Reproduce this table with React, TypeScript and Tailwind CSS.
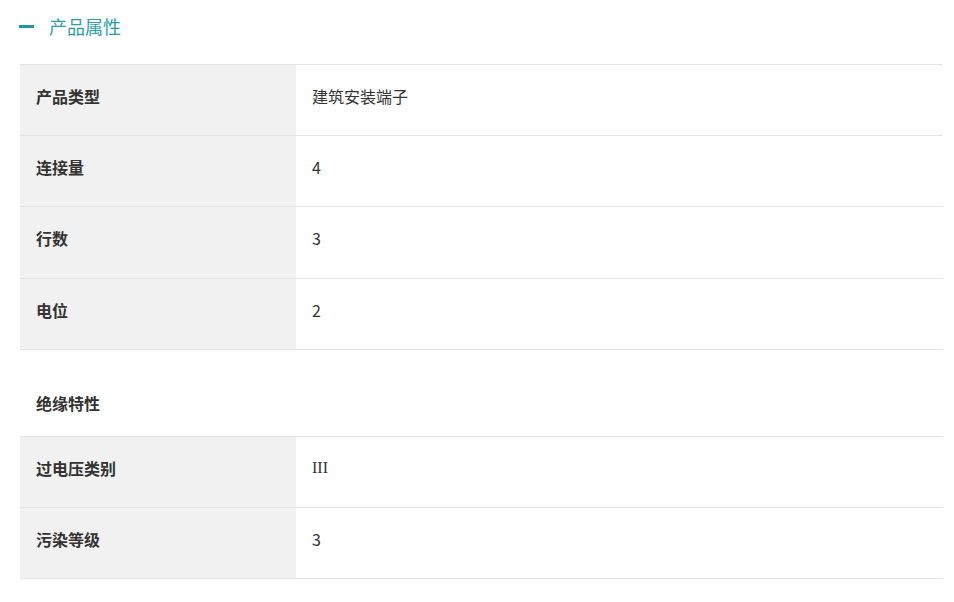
import React from "react";

const font = { fontFamily: '"Noto Sans CJK SC", "Liberation Sans", sans-serif' };

function Row({ label, value, serif }: { label: string; value: string; serif?: boolean }) {
  return (
    <div className="flex h-[71.2px] border-b border-[#e5e5e5]">
      <div className="w-[276px] shrink-0 bg-[#f1f1f1] pl-4 pb-[8px] flex items-center text-[16px] font-bold text-[#333]">
        {label}
      </div>
      <div
        className="flex-1 pl-4 pb-[8px] flex items-center text-[16px] text-[#333]"
        style={serif ? { fontFamily: '"Liberation Serif", serif' } : undefined}
      >
        {value}
      </div>
    </div>
  );
}

export default function App() {
  return (
    <div className="bg-white w-[954px] h-[602px]" style={font}>
      <div className="pl-[19px] pt-[13px] pb-[1px] flex items-center h-[26px] box-content">
        <div className="w-[15px] h-[3px] bg-[#1f989f]" />
        <div className="ml-[15px] text-[18px] text-[#2aa0a6] leading-[26px]">产品属性</div>
      </div>
      <div className="ml-[20px] w-[923px] mt-[24px]">
        <div className="border-t border-[#e5e5e5]">
          <Row label="产品类型" value="建筑安装端子" />
          <Row label="连接量" value="4" />
          <Row label="行数" value="3" />
          <Row label="电位" value="2" />
        </div>
        <div className="pt-[41px] pb-[21px] pl-4 text-[16px] font-bold text-[#333] leading-[24px]">
          绝缘特性
        </div>
        <div className="border-t border-[#e5e5e5]">
          <Row label="过电压类别" value="III" serif />
          <Row label="污染等级" value="3" />
        </div>
      </div>
    </div>
  );
}
